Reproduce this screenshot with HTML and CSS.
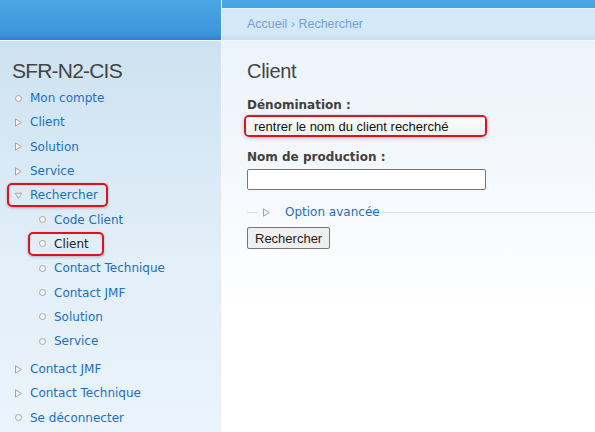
FILE: index.html
```html
<!DOCTYPE html>
<html lang="fr">
<head>
  <meta charset="UTF-8" />
  <title>SFR-N2-CIS - Client</title>
  <link rel="stylesheet" href="styles.css">
</head>
<body>
  <div class="layout">
    <aside class="side">
      <div class="side-top"></div>
      <nav class="sidebar">
        <h2 class="site-name">SFR-N2-CIS</h2>
        <ul class="menu">
          <li><span class="item"><i class="dot"></i><a href="#">Mon compte</a></span></li>
          <li><span class="item"><i class="tri"></i><a href="#">Client</a></span></li>
          <li><span class="item"><i class="tri"></i><a href="#">Solution</a></span></li>
          <li><span class="item"><i class="tri"></i><a href="#">Service</a></span></li>
          <li>
            <span class="item hl"><i class="tri down"></i><a href="#">Rechercher</a></span>
            <ul class="menu sub">
              <li><span class="item"><i class="dot"></i><a href="#">Code Client</a></span></li>
              <li><span class="item hl-sub"><i class="dot"></i><a href="#" class="active">Client</a></span></li>
              <li><span class="item"><i class="dot"></i><a href="#">Contact Technique</a></span></li>
              <li><span class="item"><i class="dot"></i><a href="#">Contact JMF</a></span></li>
              <li><span class="item"><i class="dot"></i><a href="#">Solution</a></span></li>
              <li><span class="item"><i class="dot"></i><a href="#">Service</a></span></li>
            </ul>
          </li>
          <li><span class="item"><i class="tri"></i><a href="#">Contact JMF</a></span></li>
          <li><span class="item"><i class="tri"></i><a href="#">Contact Technique</a></span></li>
          <li><span class="item"><i class="dot"></i><a href="#">Se déconnecter</a></span></li>
        </ul>
      </nav>
    </aside>

    <main class="main">
      <div class="main-top"></div>
      <div class="crumbs"><a href="#">Accueil</a> › <a href="#">Rechercher</a></div>
      <div class="content">
        <h1 class="title">Client</h1>
        <form class="search">
          <label class="label" for="denom">Dénomination :</label>
          <span class="hl-input"><input id="denom" type="text" value="rentrer le nom du client recherché" /></span>

          <label class="label" for="prod">Nom de production :</label>
          <input id="prod" class="field" type="text" />

          <fieldset class="options">
            <legend><i class="tri"></i><a href="#">Option avancée</a></legend>
          </fieldset>

          <button type="button" class="btn">Rechercher</button>
        </form>
      </div>
    </main>
  </div>
</body>
</html>
```

FILE: styles.css
```css
body {
  margin: 0;
  font-family: "DejaVu Sans", Verdana, sans-serif;
  font-size: 12px;
  color: #444;
  background: #fff;
  height: 432px;
  overflow: hidden;
}
a {
  color: #1a6fc3;
  text-decoration: none;
}
.layout {
  display: grid;
  grid-template-columns: 221px 1fr;
  height: 432px;
}

/* blue header band */
.side-top, .main-top {
  background: linear-gradient(#4aa6e4, #3e95dc 85%, #2f7fd0);
  background-size: 100% 40px;
}
.side-top { height: 40px; border-bottom: 1px solid #f2f8fd; }
.main-top { height: 8px; }

/* sidebar */
.side {
  display: flex;
  flex-direction: column;
}
.sidebar {
  flex: 1;
  background: linear-gradient(#cde2f1, #e2eef8 55%, #ebf4fc);
}
.site-name {
  margin: 19px 0 4px 12px;
  font-family: "Liberation Sans", Arial, sans-serif;
  font-weight: normal;
  font-size: 21px;
  letter-spacing: -0.8px;
  line-height: 22px;
  color: #444;
}
.menu {
  list-style: none;
  margin: 0;
  padding: 0;
}
.item {
  display: flex;
  align-items: center;
  width: fit-content;
  height: 24.3px;
  box-sizing: border-box;
  padding-left: 15px;
}
.menu.sub { margin-bottom: 3.7px; }
.menu.sub .item { padding-left: 39px; }
.item i {
  width: 7px;
  margin-right: 8px;
  flex: none;
}
.dot {
  border: 1px solid #a8a8a8;
  border-radius: 50%;
  background: #f4f4f4;
  box-sizing: border-box;
  height: 7px;
}
.tri {
  display: inline-block;
  height: 9px;
  background: no-repeat center / 7px 9px url("data:image/svg+xml,%3Csvg xmlns='http://www.w3.org/2000/svg' width='7' height='9'%3E%3Cpath d='M0.5 0.8 L6.3 4.5 L0.5 8.2 Z' fill='%23f6f6f6' stroke='%23a5a5a5'/%3E%3C/svg%3E");
}
.tri.down {
  background-image: url("data:image/svg+xml,%3Csvg xmlns='http://www.w3.org/2000/svg' width='7' height='9'%3E%3Cpath d='M0.2 2.2 L6.8 2.2 L3.5 7.6 Z' fill='%23f6f6f6' stroke='%23a5a5a5'/%3E%3C/svg%3E");
}
.active { color: #222; }

/* red highlight boxes */
.hl, .menu.sub .hl-sub {
  border: 2px solid #e3101b;
  border-radius: 5px;
  box-shadow: 0 1px 3px rgba(0, 0, 0, 0.25);
}
.hl {
  margin-left: 7px;
  padding: 0 8px 0 6px;
}
.menu.sub .hl-sub {
  margin-left: 28px;
  padding: 0 13px 0 9px;
}

/* main */
.main {
  display: flex;
  flex-direction: column;
  border-left: 1px solid #f6fafe;
  background: #4aa6e4;
}
.crumbs {
  height: 31px;
  line-height: 30px;
  padding-left: 25px;
  border-top: 1px solid #e9f4fd;
  border-bottom: 1px solid #f4f9fe;
  background: linear-gradient(#d3e8f8, #d4e8f8 80%, #c8def5);
  font-family: "Liberation Sans", Arial, sans-serif;
  font-size: 12.5px;
  color: #7ea4cf;
}
.crumbs a { color: #76a0d2; }
.content {
  flex: 1;
  padding: 0 0 0 25px;
  background: linear-gradient(#ecf3fb, #f6f9fd 40%, #fff 70%);
}
.title {
  margin: 19px 0 16px;
  font-family: "Liberation Sans", Arial, sans-serif;
  font-weight: normal;
  font-size: 20px;
  letter-spacing: -0.3px;
  line-height: 22px;
  color: #444;
}
.search {
  display: flex;
  flex-direction: column;
  align-items: flex-start;
}
.label {
  font-weight: bold;
  font-size: 12px;
  line-height: 15px;
  color: #433f3b;
  margin-bottom: 4px;
}
.label + .hl-input { margin-top: -2px; }
.hl-input {
  display: block;
  margin: 0 0 13px -3px;
  width: 243px;
  height: 22px;
  box-sizing: border-box;
  border: 2px solid #e3101b;
  border-radius: 5px;
  box-shadow: 0 1px 4px rgba(0, 0, 0, 0.22);
  overflow: hidden;
}
.hl-input input {
  width: 100%;
  height: 100%;
  box-sizing: border-box;
  border: 0;
  padding: 0 0 0 8px;
  background: linear-gradient(#fdfdfd, #f1f1f1);
  font-family: "Liberation Sans", Arial, sans-serif;
  font-size: 13px;
  color: #111;
}
.field {
  width: 239px;
  height: 21px;
  box-sizing: border-box;
  margin: 0 0 14px;
  border: 1px solid #767676;
  border-radius: 2px;
  background: #fff;
}
.options {
  align-self: stretch;
  margin: 0 0 14px;
  padding: 0;
  border: 0;
  border-top: 1px solid #d6e1ec;
  min-width: 0;
  height: 8px;
}
.options legend {
  margin-left: 11px;
  padding: 0 2px 0 5px;
  display: flex;
  align-items: center;
  line-height: 16px;
}
.options .tri { width: 7px; margin-right: 15px; }
.btn {
  font-family: "Liberation Sans", Arial, sans-serif;
  font-size: 13px;
  color: #222;
  height: 22px;
  padding: 0 7px;
  border: 1px solid #767676;
  border-radius: 2px;
  background: #efefef;
}
```
